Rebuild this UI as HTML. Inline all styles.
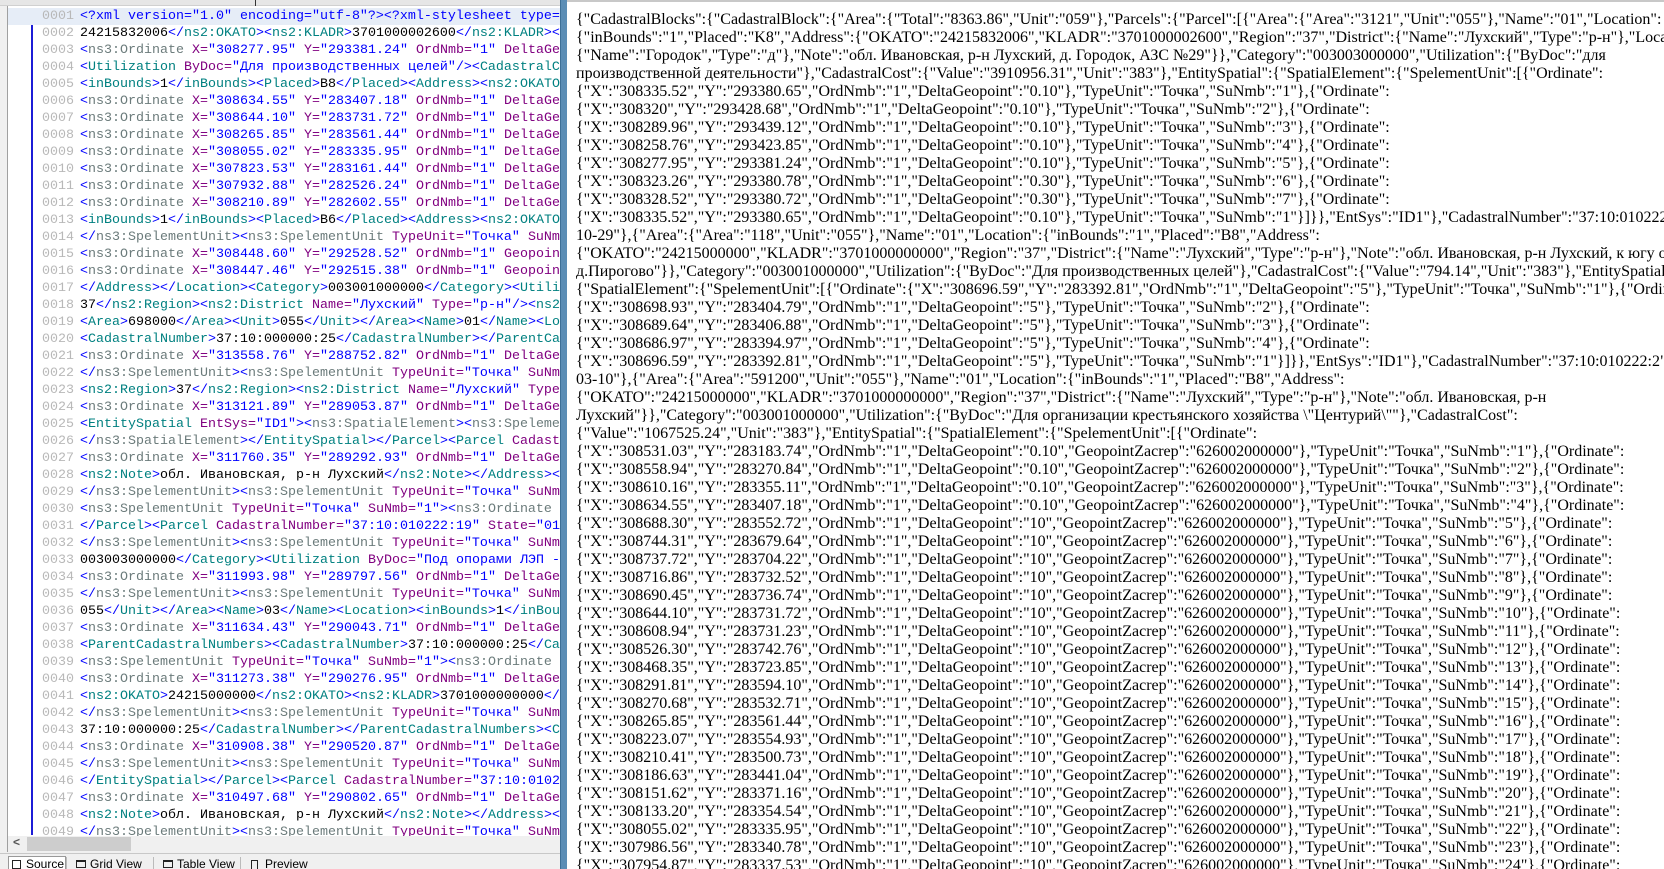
<!DOCTYPE html>
<html><head><meta charset="utf-8"><style>
*{margin:0;padding:0;box-sizing:border-box}
html,body{width:1664px;height:869px;overflow:hidden}
body{background:#fff;position:relative;font-family:"Liberation Sans",sans-serif}
#left{position:absolute;left:0;top:0;width:560px;height:869px;background:#f0f0f0;overflow:hidden}
#topbar{position:absolute;left:0;top:0;width:560px;height:6px;background:#e6e6e6;border-bottom:1px solid #d0d0d0}
#topbar .s{position:absolute;left:255px;top:0;width:1px;height:6px;background:#333}
#edit{position:absolute;left:7px;top:6px;width:553px;height:830px;background:#fff;border-left:1px solid #a0a0a0;overflow:hidden}
#vline{position:absolute;left:23px;top:8px;width:2px;height:821px;background:#1c1cd6}
#vline2{position:absolute;left:23px;top:8px;width:6px;height:2px;background:#1c1cd6}
.code{position:absolute;left:0;top:2px;font-family:"Liberation Mono",monospace;font-size:13.33px;line-height:17px;white-space:normal;width:1200px}
.r{height:17px;padding-left:72px;position:relative;white-space:pre;overflow:hidden}
.r.h{background:#e6edf7}
.n{position:absolute;left:34px;color:#b8b8b8}
.b{color:#0000ff}.t{color:#008080}.g{color:#6b7b7b}.a{color:#800080}.v{color:#0000ff}.k{color:#000}
#hs{position:absolute;left:7px;top:836px;width:553px;height:16px;background:#f0f0f0;border-left:1px solid #a0a0a0}
#hs .th{position:absolute;left:19px;top:1px;width:104px;height:14px;background:#cdcdcd}
#hs .ar{position:absolute;left:5px;top:-1px;font-size:12px;color:#555;font-weight:bold}
#tabs{position:absolute;left:0;top:853px;width:560px;height:16px;background:#f0f0f0;border-top:1px solid #c8c8c8;font-size:12px;color:#000}
.tab{position:absolute;top:3px;height:16px;padding-left:16px;white-space:nowrap}
.tab i{position:absolute;left:2px;top:3px;width:10px;height:8px;border:1px solid #222;border-top-width:2px}
.sep{position:absolute;top:3px;width:1px;height:14px;background:#bbb}
#div{position:absolute;left:560px;top:0;width:7px;height:869px;background:#5b8db5;border-left:1px solid #3d6f96}
#right{position:absolute;left:567px;top:0;width:1097px;height:869px;background:#fff;border-top:2px solid #c8c8c8;overflow:hidden}
#rt{position:absolute;left:9px;top:9px;font-family:"Liberation Serif",serif;font-size:16px;line-height:18px;white-space:nowrap;color:#000}
</style></head><body>
<div id="left">
<div id="topbar"><div class="s"></div></div>
<div id="edit">
<div id="vline"></div><div id="vline2"></div>
<div class="code"><div class="r h"><span class="n">0001</span><span class="b">&lt;?xml version="1.0" encoding="utf-8"?&gt;&lt;?xml-stylesheet type="text/xsl"?&gt;</span></div><div class="r"><span class="n">0002</span><span class="k">24215832006</span><span class="b">&lt;/</span><span class="t">ns2:OKATO</span><span class="b">&gt;&lt;</span><span class="t">ns2:KLADR</span><span class="b">&gt;</span><span class="k">3701000002600</span><span class="b">&lt;/</span><span class="t">ns2:KLADR</span><span class="b">&gt;&lt;</span></div><div class="r"><span class="n">0003</span><span class="b">&lt;</span><span class="g">ns3:Ordinate </span><span class="a">X=</span><span class="v">"308277.95" </span><span class="a">Y=</span><span class="v">"293381.24" </span><span class="a">OrdNmb=</span><span class="v">"1" </span><span class="a">DeltaGeopoint</span></div><div class="r"><span class="n">0004</span><span class="b">&lt;</span><span class="t">Utilization </span><span class="a">ByDoc=</span><span class="v">"Для производственных целей"</span><span class="b">/&gt;&lt;</span><span class="t">CadastralCost</span></div><div class="r"><span class="n">0005</span><span class="b">&lt;</span><span class="t">inBounds</span><span class="b">&gt;</span><span class="k">1</span><span class="b">&lt;/</span><span class="t">inBounds</span><span class="b">&gt;&lt;</span><span class="t">Placed</span><span class="b">&gt;</span><span class="k">B8</span><span class="b">&lt;/</span><span class="t">Placed</span><span class="b">&gt;&lt;</span><span class="t">Address</span><span class="b">&gt;&lt;</span><span class="t">ns2:OKATO</span></div><div class="r"><span class="n">0006</span><span class="b">&lt;</span><span class="g">ns3:Ordinate </span><span class="a">X=</span><span class="v">"308634.55" </span><span class="a">Y=</span><span class="v">"283407.18" </span><span class="a">OrdNmb=</span><span class="v">"1" </span><span class="a">DeltaGeopoint</span></div><div class="r"><span class="n">0007</span><span class="b">&lt;</span><span class="g">ns3:Ordinate </span><span class="a">X=</span><span class="v">"308644.10" </span><span class="a">Y=</span><span class="v">"283731.72" </span><span class="a">OrdNmb=</span><span class="v">"1" </span><span class="a">DeltaGeopoint</span></div><div class="r"><span class="n">0008</span><span class="b">&lt;</span><span class="g">ns3:Ordinate </span><span class="a">X=</span><span class="v">"308265.85" </span><span class="a">Y=</span><span class="v">"283561.44" </span><span class="a">OrdNmb=</span><span class="v">"1" </span><span class="a">DeltaGeopoint</span></div><div class="r"><span class="n">0009</span><span class="b">&lt;</span><span class="g">ns3:Ordinate </span><span class="a">X=</span><span class="v">"308055.02" </span><span class="a">Y=</span><span class="v">"283335.95" </span><span class="a">OrdNmb=</span><span class="v">"1" </span><span class="a">DeltaGeopoint</span></div><div class="r"><span class="n">0010</span><span class="b">&lt;</span><span class="g">ns3:Ordinate </span><span class="a">X=</span><span class="v">"307823.53" </span><span class="a">Y=</span><span class="v">"283161.44" </span><span class="a">OrdNmb=</span><span class="v">"1" </span><span class="a">DeltaGeopoint</span></div><div class="r"><span class="n">0011</span><span class="b">&lt;</span><span class="g">ns3:Ordinate </span><span class="a">X=</span><span class="v">"307932.88" </span><span class="a">Y=</span><span class="v">"282526.24" </span><span class="a">OrdNmb=</span><span class="v">"1" </span><span class="a">DeltaGeopoint</span></div><div class="r"><span class="n">0012</span><span class="b">&lt;</span><span class="g">ns3:Ordinate </span><span class="a">X=</span><span class="v">"308210.89" </span><span class="a">Y=</span><span class="v">"282602.55" </span><span class="a">OrdNmb=</span><span class="v">"1" </span><span class="a">DeltaGeopoint</span></div><div class="r"><span class="n">0013</span><span class="b">&lt;</span><span class="t">inBounds</span><span class="b">&gt;</span><span class="k">1</span><span class="b">&lt;/</span><span class="t">inBounds</span><span class="b">&gt;&lt;</span><span class="t">Placed</span><span class="b">&gt;</span><span class="k">B6</span><span class="b">&lt;/</span><span class="t">Placed</span><span class="b">&gt;&lt;</span><span class="t">Address</span><span class="b">&gt;&lt;</span><span class="t">ns2:OKATO</span></div><div class="r"><span class="n">0014</span><span class="b">&lt;/</span><span class="g">ns3:SpelementUnit</span><span class="b">&gt;&lt;</span><span class="g">ns3:SpelementUnit </span><span class="a">TypeUnit=</span><span class="v">"Точка" </span><span class="a">SuNmb</span></div><div class="r"><span class="n">0015</span><span class="b">&lt;</span><span class="g">ns3:Ordinate </span><span class="a">X=</span><span class="v">"308448.60" </span><span class="a">Y=</span><span class="v">"292528.52" </span><span class="a">OrdNmb=</span><span class="v">"1" </span><span class="a">Geopoint</span></div><div class="r"><span class="n">0016</span><span class="b">&lt;</span><span class="g">ns3:Ordinate </span><span class="a">X=</span><span class="v">"308447.46" </span><span class="a">Y=</span><span class="v">"292515.38" </span><span class="a">OrdNmb=</span><span class="v">"1" </span><span class="a">Geopoint</span></div><div class="r"><span class="n">0017</span><span class="b">&lt;/</span><span class="t">Address</span><span class="b">&gt;&lt;/</span><span class="t">Location</span><span class="b">&gt;&lt;</span><span class="t">Category</span><span class="b">&gt;</span><span class="k">003001000000</span><span class="b">&lt;/</span><span class="t">Category</span><span class="b">&gt;&lt;</span><span class="t">Utili</span></div><div class="r"><span class="n">0018</span><span class="k">37</span><span class="b">&lt;/</span><span class="t">ns2:Region</span><span class="b">&gt;&lt;</span><span class="t">ns2:District </span><span class="a">Name=</span><span class="v">"Лухский" </span><span class="a">Type=</span><span class="v">"р-н"</span><span class="b">/&gt;&lt;</span><span class="t">ns2</span></div><div class="r"><span class="n">0019</span><span class="b">&lt;</span><span class="t">Area</span><span class="b">&gt;</span><span class="k">698000</span><span class="b">&lt;/</span><span class="t">Area</span><span class="b">&gt;&lt;</span><span class="t">Unit</span><span class="b">&gt;</span><span class="k">055</span><span class="b">&lt;/</span><span class="t">Unit</span><span class="b">&gt;&lt;/</span><span class="t">Area</span><span class="b">&gt;&lt;</span><span class="t">Name</span><span class="b">&gt;</span><span class="k">01</span><span class="b">&lt;/</span><span class="t">Name</span><span class="b">&gt;&lt;</span><span class="t">Loc</span></div><div class="r"><span class="n">0020</span><span class="b">&lt;</span><span class="t">CadastralNumber</span><span class="b">&gt;</span><span class="k">37:10:000000:25</span><span class="b">&lt;/</span><span class="t">CadastralNumber</span><span class="b">&gt;&lt;/</span><span class="t">ParentCa</span></div><div class="r"><span class="n">0021</span><span class="b">&lt;</span><span class="g">ns3:Ordinate </span><span class="a">X=</span><span class="v">"313558.76" </span><span class="a">Y=</span><span class="v">"288752.82" </span><span class="a">OrdNmb=</span><span class="v">"1" </span><span class="a">DeltaGeo</span></div><div class="r"><span class="n">0022</span><span class="b">&lt;/</span><span class="g">ns3:SpelementUnit</span><span class="b">&gt;&lt;</span><span class="g">ns3:SpelementUnit </span><span class="a">TypeUnit=</span><span class="v">"Точка" </span><span class="a">SuNmb</span></div><div class="r"><span class="n">0023</span><span class="b">&lt;</span><span class="t">ns2:Region</span><span class="b">&gt;</span><span class="k">37</span><span class="b">&lt;/</span><span class="t">ns2:Region</span><span class="b">&gt;&lt;</span><span class="t">ns2:District </span><span class="a">Name=</span><span class="v">"Лухский" </span><span class="a">Type</span></div><div class="r"><span class="n">0024</span><span class="b">&lt;</span><span class="g">ns3:Ordinate </span><span class="a">X=</span><span class="v">"313121.89" </span><span class="a">Y=</span><span class="v">"289053.87" </span><span class="a">OrdNmb=</span><span class="v">"1" </span><span class="a">DeltaGeo</span></div><div class="r"><span class="n">0025</span><span class="b">&lt;</span><span class="t">EntitySpatial </span><span class="a">EntSys=</span><span class="v">"ID1"</span><span class="b">&gt;&lt;</span><span class="g">ns3:SpatialElement</span><span class="b">&gt;&lt;</span><span class="g">ns3:Speleme</span></div><div class="r"><span class="n">0026</span><span class="b">&lt;/</span><span class="g">ns3:SpatialElement</span><span class="b">&gt;&lt;/</span><span class="t">EntitySpatial</span><span class="b">&gt;&lt;/</span><span class="t">Parcel</span><span class="b">&gt;&lt;</span><span class="t">Parcel </span><span class="a">Cadast</span></div><div class="r"><span class="n">0027</span><span class="b">&lt;</span><span class="g">ns3:Ordinate </span><span class="a">X=</span><span class="v">"311760.35" </span><span class="a">Y=</span><span class="v">"289292.93" </span><span class="a">OrdNmb=</span><span class="v">"1" </span><span class="a">DeltaGeo</span></div><div class="r"><span class="n">0028</span><span class="b">&lt;</span><span class="t">ns2:Note</span><span class="b">&gt;</span><span class="k">обл. Ивановская, р-н Лухский</span><span class="b">&lt;/</span><span class="t">ns2:Note</span><span class="b">&gt;&lt;/</span><span class="t">Address</span><span class="b">&gt;&lt;</span></div><div class="r"><span class="n">0029</span><span class="b">&lt;/</span><span class="g">ns3:SpelementUnit</span><span class="b">&gt;&lt;</span><span class="g">ns3:SpelementUnit </span><span class="a">TypeUnit=</span><span class="v">"Точка" </span><span class="a">SuNmb</span></div><div class="r"><span class="n">0030</span><span class="b">&lt;</span><span class="g">ns3:SpelementUnit </span><span class="a">TypeUnit=</span><span class="v">"Точка" </span><span class="a">SuNmb=</span><span class="v">"1"</span><span class="b">&gt;&lt;</span><span class="g">ns3:Ordinate </span><span class="a">X</span></div><div class="r"><span class="n">0031</span><span class="b">&lt;/</span><span class="t">Parcel</span><span class="b">&gt;&lt;</span><span class="t">Parcel </span><span class="a">CadastralNumber=</span><span class="v">"37:10:010222:19" </span><span class="a">State=</span><span class="v">"01</span></div><div class="r"><span class="n">0032</span><span class="b">&lt;/</span><span class="g">ns3:SpelementUnit</span><span class="b">&gt;&lt;</span><span class="g">ns3:SpelementUnit </span><span class="a">TypeUnit=</span><span class="v">"Точка" </span><span class="a">SuNmb</span></div><div class="r"><span class="n">0033</span><span class="k">003003000000</span><span class="b">&lt;/</span><span class="t">Category</span><span class="b">&gt;&lt;</span><span class="t">Utilization </span><span class="a">ByDoc=</span><span class="v">"Под опорами ЛЭП -</span></div><div class="r"><span class="n">0034</span><span class="b">&lt;</span><span class="g">ns3:Ordinate </span><span class="a">X=</span><span class="v">"311993.98" </span><span class="a">Y=</span><span class="v">"289797.56" </span><span class="a">OrdNmb=</span><span class="v">"1" </span><span class="a">DeltaGeo</span></div><div class="r"><span class="n">0035</span><span class="b">&lt;/</span><span class="g">ns3:SpelementUnit</span><span class="b">&gt;&lt;</span><span class="g">ns3:SpelementUnit </span><span class="a">TypeUnit=</span><span class="v">"Точка" </span><span class="a">SuNmb</span></div><div class="r"><span class="n">0036</span><span class="k">055</span><span class="b">&lt;/</span><span class="t">Unit</span><span class="b">&gt;&lt;/</span><span class="t">Area</span><span class="b">&gt;&lt;</span><span class="t">Name</span><span class="b">&gt;</span><span class="k">03</span><span class="b">&lt;/</span><span class="t">Name</span><span class="b">&gt;&lt;</span><span class="t">Location</span><span class="b">&gt;&lt;</span><span class="t">inBounds</span><span class="b">&gt;</span><span class="k">1</span><span class="b">&lt;/</span><span class="t">inBou</span></div><div class="r"><span class="n">0037</span><span class="b">&lt;</span><span class="g">ns3:Ordinate </span><span class="a">X=</span><span class="v">"311634.43" </span><span class="a">Y=</span><span class="v">"290043.71" </span><span class="a">OrdNmb=</span><span class="v">"1" </span><span class="a">DeltaGeo</span></div><div class="r"><span class="n">0038</span><span class="b">&lt;</span><span class="t">ParentCadastralNumbers</span><span class="b">&gt;&lt;</span><span class="t">CadastralNumber</span><span class="b">&gt;</span><span class="k">37:10:000000:25</span><span class="b">&lt;/</span><span class="t">Ca</span></div><div class="r"><span class="n">0039</span><span class="b">&lt;</span><span class="g">ns3:SpelementUnit </span><span class="a">TypeUnit=</span><span class="v">"Точка" </span><span class="a">SuNmb=</span><span class="v">"1"</span><span class="b">&gt;&lt;</span><span class="g">ns3:Ordinate </span><span class="a">X</span></div><div class="r"><span class="n">0040</span><span class="b">&lt;</span><span class="g">ns3:Ordinate </span><span class="a">X=</span><span class="v">"311273.38" </span><span class="a">Y=</span><span class="v">"290276.95" </span><span class="a">OrdNmb=</span><span class="v">"1" </span><span class="a">DeltaGeo</span></div><div class="r"><span class="n">0041</span><span class="b">&lt;</span><span class="t">ns2:OKATO</span><span class="b">&gt;</span><span class="k">24215000000</span><span class="b">&lt;/</span><span class="t">ns2:OKATO</span><span class="b">&gt;&lt;</span><span class="t">ns2:KLADR</span><span class="b">&gt;</span><span class="k">3701000000000</span><span class="b">&lt;/</span></div><div class="r"><span class="n">0042</span><span class="b">&lt;/</span><span class="g">ns3:SpelementUnit</span><span class="b">&gt;&lt;</span><span class="g">ns3:SpelementUnit </span><span class="a">TypeUnit=</span><span class="v">"Точка" </span><span class="a">SuNmb</span></div><div class="r"><span class="n">0043</span><span class="k">37:10:000000:25</span><span class="b">&lt;/</span><span class="t">CadastralNumber</span><span class="b">&gt;&lt;/</span><span class="t">ParentCadastralNumbers</span><span class="b">&gt;&lt;</span><span class="t">C</span></div><div class="r"><span class="n">0044</span><span class="b">&lt;</span><span class="g">ns3:Ordinate </span><span class="a">X=</span><span class="v">"310908.38" </span><span class="a">Y=</span><span class="v">"290520.87" </span><span class="a">OrdNmb=</span><span class="v">"1" </span><span class="a">DeltaGeo</span></div><div class="r"><span class="n">0045</span><span class="b">&lt;/</span><span class="g">ns3:SpelementUnit</span><span class="b">&gt;&lt;</span><span class="g">ns3:SpelementUnit </span><span class="a">TypeUnit=</span><span class="v">"Точка" </span><span class="a">SuNmb</span></div><div class="r"><span class="n">0046</span><span class="b">&lt;/</span><span class="t">EntitySpatial</span><span class="b">&gt;&lt;/</span><span class="t">Parcel</span><span class="b">&gt;&lt;</span><span class="t">Parcel </span><span class="a">CadastralNumber=</span><span class="v">"37:10:01022</span></div><div class="r"><span class="n">0047</span><span class="b">&lt;</span><span class="g">ns3:Ordinate </span><span class="a">X=</span><span class="v">"310497.68" </span><span class="a">Y=</span><span class="v">"290802.65" </span><span class="a">OrdNmb=</span><span class="v">"1" </span><span class="a">DeltaGeo</span></div><div class="r"><span class="n">0048</span><span class="b">&lt;</span><span class="t">ns2:Note</span><span class="b">&gt;</span><span class="k">обл. Ивановская, р-н Лухский</span><span class="b">&lt;/</span><span class="t">ns2:Note</span><span class="b">&gt;&lt;/</span><span class="t">Address</span><span class="b">&gt;&lt;/</span></div><div class="r"><span class="n">0049</span><span class="b">&lt;/</span><span class="g">ns3:SpelementUnit</span><span class="b">&gt;&lt;</span><span class="g">ns3:SpelementUnit </span><span class="a">TypeUnit=</span><span class="v">"Точка" </span><span class="a">SuNmb</span></div></div>
</div>
<div id="hs"><span class="ar">&lt;</span><div class="th"></div></div>
<div id="tabs">
<div style="position:absolute;left:8px;top:2px;width:58px;height:16px;background:#fff;border:1px solid #999;border-bottom:none"></div>
<div class="tab" style="left:10px"><i style="border-top-width:1px;width:9px;height:9px"></i>Source</div>
<div class="sep" style="left:66px"></div>
<div class="tab" style="left:74px"><i></i>Grid View</div>
<div class="sep" style="left:153px"></div>
<div class="tab" style="left:161px"><i></i>Table View</div>
<div class="sep" style="left:240px"></div>
<div class="tab" style="left:249px"><i style="width:7px;height:10px;border-top-width:1px"></i>Preview</div>
</div>
</div>
<div id="div"></div>
<div id="right"><div id="rt">
{"CadastralBlocks":{"CadastralBlock":{"Area":{"Total":"8363.86","Unit":"059"},"Parcels":{"Parcel":[{"Area":{"Area":"3121","Unit":"055"},"Name":"01","Location":<br>
{"inBounds":"1","Placed":"K8","Address":{"OKATO":"24215832006","KLADR":"3701000002600","Region":"37","District":{"Name":"Лухский","Type":"р-н"},"Locality":<br>
{"Name":"Городок","Type":"д"},"Note":"обл. Ивановская, р-н Лухский, д. Городок, АЗС №29"}},"Category":"003003000000","Utilization":{"ByDoc":"для<br>
производственной деятельности"},"CadastralCost":{"Value":"3910956.31","Unit":"383"},"EntitySpatial":{"SpatialElement":{"SpelementUnit":[{"Ordinate":<br>
{"X":"308335.52","Y":"293380.65","OrdNmb":"1","DeltaGeopoint":"0.10"},"TypeUnit":"Точка","SuNmb":"1"},{"Ordinate":<br>
{"X":"308320","Y":"293428.68","OrdNmb":"1","DeltaGeopoint":"0.10"},"TypeUnit":"Точка","SuNmb":"2"},{"Ordinate":<br>
{"X":"308289.96","Y":"293439.12","OrdNmb":"1","DeltaGeopoint":"0.10"},"TypeUnit":"Точка","SuNmb":"3"},{"Ordinate":<br>
{"X":"308258.76","Y":"293423.85","OrdNmb":"1","DeltaGeopoint":"0.10"},"TypeUnit":"Точка","SuNmb":"4"},{"Ordinate":<br>
{"X":"308277.95","Y":"293381.24","OrdNmb":"1","DeltaGeopoint":"0.10"},"TypeUnit":"Точка","SuNmb":"5"},{"Ordinate":<br>
{"X":"308323.26","Y":"293380.78","OrdNmb":"1","DeltaGeopoint":"0.30"},"TypeUnit":"Точка","SuNmb":"6"},{"Ordinate":<br>
{"X":"308328.52","Y":"293380.72","OrdNmb":"1","DeltaGeopoint":"0.30"},"TypeUnit":"Точка","SuNmb":"7"},{"Ordinate":<br>
{"X":"308335.52","Y":"293380.65","OrdNmb":"1","DeltaGeopoint":"0.10"},"TypeUnit":"Точка","SuNmb":"1"}]}},"EntSys":"ID1"},"CadastralNumber":"37:10:010222:1","DateCreated":"2008-<br>
10-29"},{"Area":{"Area":"118","Unit":"055"},"Name":"01","Location":{"inBounds":"1","Placed":"B8","Address":<br>
{"OKATO":"24215000000","KLADR":"3701000000000","Region":"37","District":{"Name":"Лухский","Type":"р-н"},"Note":"обл. Ивановская, р-н Лухский, к югу от<br>
д.Пирогово"}},"Category":"003001000000","Utilization":{"ByDoc":"Для производственных целей"},"CadastralCost":{"Value":"794.14","Unit":"383"},"EntitySpatial":<br>
{"SpatialElement":{"SpelementUnit":[{"Ordinate":{"X":"308696.59","Y":"283392.81","OrdNmb":"1","DeltaGeopoint":"5"},"TypeUnit":"Точка","SuNmb":"1"},{"Ordinate":<br>
{"X":"308698.93","Y":"283404.79","OrdNmb":"1","DeltaGeopoint":"5"},"TypeUnit":"Точка","SuNmb":"2"},{"Ordinate":<br>
{"X":"308689.64","Y":"283406.88","OrdNmb":"1","DeltaGeopoint":"5"},"TypeUnit":"Точка","SuNmb":"3"},{"Ordinate":<br>
{"X":"308686.97","Y":"283394.97","OrdNmb":"1","DeltaGeopoint":"5"},"TypeUnit":"Точка","SuNmb":"4"},{"Ordinate":<br>
{"X":"308696.59","Y":"283392.81","OrdNmb":"1","DeltaGeopoint":"5"},"TypeUnit":"Точка","SuNmb":"1"}]}},"EntSys":"ID1"},"CadastralNumber":"37:10:010222:2","DateCreated":"2008-<br>
03-10"},{"Area":{"Area":"591200","Unit":"055"},"Name":"01","Location":{"inBounds":"1","Placed":"B8","Address":<br>
{"OKATO":"24215000000","KLADR":"3701000000000","Region":"37","District":{"Name":"Лухский","Type":"р-н"},"Note":"обл. Ивановская, р-н<br>
Лухский"}},"Category":"003001000000","Utilization":{"ByDoc":"Для организации крестьянского хозяйства \"Центурий\""},"CadastralCost":<br>
{"Value":"1067525.24","Unit":"383"},"EntitySpatial":{"SpatialElement":{"SpelementUnit":[{"Ordinate":<br>
{"X":"308531.03","Y":"283183.74","OrdNmb":"1","DeltaGeopoint":"0.10","GeopointZacrep":"626002000000"},"TypeUnit":"Точка","SuNmb":"1"},{"Ordinate":<br>
{"X":"308558.94","Y":"283270.84","OrdNmb":"1","DeltaGeopoint":"0.10","GeopointZacrep":"626002000000"},"TypeUnit":"Точка","SuNmb":"2"},{"Ordinate":<br>
{"X":"308610.16","Y":"283355.11","OrdNmb":"1","DeltaGeopoint":"0.10","GeopointZacrep":"626002000000"},"TypeUnit":"Точка","SuNmb":"3"},{"Ordinate":<br>
{"X":"308634.55","Y":"283407.18","OrdNmb":"1","DeltaGeopoint":"0.10","GeopointZacrep":"626002000000"},"TypeUnit":"Точка","SuNmb":"4"},{"Ordinate":<br>
{"X":"308688.30","Y":"283552.72","OrdNmb":"1","DeltaGeopoint":"10","GeopointZacrep":"626002000000"},"TypeUnit":"Точка","SuNmb":"5"},{"Ordinate":<br>
{"X":"308744.31","Y":"283679.64","OrdNmb":"1","DeltaGeopoint":"10","GeopointZacrep":"626002000000"},"TypeUnit":"Точка","SuNmb":"6"},{"Ordinate":<br>
{"X":"308737.72","Y":"283704.22","OrdNmb":"1","DeltaGeopoint":"10","GeopointZacrep":"626002000000"},"TypeUnit":"Точка","SuNmb":"7"},{"Ordinate":<br>
{"X":"308716.86","Y":"283732.52","OrdNmb":"1","DeltaGeopoint":"10","GeopointZacrep":"626002000000"},"TypeUnit":"Точка","SuNmb":"8"},{"Ordinate":<br>
{"X":"308690.45","Y":"283736.74","OrdNmb":"1","DeltaGeopoint":"10","GeopointZacrep":"626002000000"},"TypeUnit":"Точка","SuNmb":"9"},{"Ordinate":<br>
{"X":"308644.10","Y":"283731.72","OrdNmb":"1","DeltaGeopoint":"10","GeopointZacrep":"626002000000"},"TypeUnit":"Точка","SuNmb":"10"},{"Ordinate":<br>
{"X":"308608.94","Y":"283731.23","OrdNmb":"1","DeltaGeopoint":"10","GeopointZacrep":"626002000000"},"TypeUnit":"Точка","SuNmb":"11"},{"Ordinate":<br>
{"X":"308526.30","Y":"283742.76","OrdNmb":"1","DeltaGeopoint":"10","GeopointZacrep":"626002000000"},"TypeUnit":"Точка","SuNmb":"12"},{"Ordinate":<br>
{"X":"308468.35","Y":"283723.85","OrdNmb":"1","DeltaGeopoint":"10","GeopointZacrep":"626002000000"},"TypeUnit":"Точка","SuNmb":"13"},{"Ordinate":<br>
{"X":"308291.81","Y":"283594.10","OrdNmb":"1","DeltaGeopoint":"10","GeopointZacrep":"626002000000"},"TypeUnit":"Точка","SuNmb":"14"},{"Ordinate":<br>
{"X":"308270.68","Y":"283532.71","OrdNmb":"1","DeltaGeopoint":"10","GeopointZacrep":"626002000000"},"TypeUnit":"Точка","SuNmb":"15"},{"Ordinate":<br>
{"X":"308265.85","Y":"283561.44","OrdNmb":"1","DeltaGeopoint":"10","GeopointZacrep":"626002000000"},"TypeUnit":"Точка","SuNmb":"16"},{"Ordinate":<br>
{"X":"308223.07","Y":"283554.93","OrdNmb":"1","DeltaGeopoint":"10","GeopointZacrep":"626002000000"},"TypeUnit":"Точка","SuNmb":"17"},{"Ordinate":<br>
{"X":"308210.41","Y":"283500.73","OrdNmb":"1","DeltaGeopoint":"10","GeopointZacrep":"626002000000"},"TypeUnit":"Точка","SuNmb":"18"},{"Ordinate":<br>
{"X":"308186.63","Y":"283441.04","OrdNmb":"1","DeltaGeopoint":"10","GeopointZacrep":"626002000000"},"TypeUnit":"Точка","SuNmb":"19"},{"Ordinate":<br>
{"X":"308151.62","Y":"283371.16","OrdNmb":"1","DeltaGeopoint":"10","GeopointZacrep":"626002000000"},"TypeUnit":"Точка","SuNmb":"20"},{"Ordinate":<br>
{"X":"308133.20","Y":"283354.54","OrdNmb":"1","DeltaGeopoint":"10","GeopointZacrep":"626002000000"},"TypeUnit":"Точка","SuNmb":"21"},{"Ordinate":<br>
{"X":"308055.02","Y":"283335.95","OrdNmb":"1","DeltaGeopoint":"10","GeopointZacrep":"626002000000"},"TypeUnit":"Точка","SuNmb":"22"},{"Ordinate":<br>
{"X":"307986.56","Y":"283340.78","OrdNmb":"1","DeltaGeopoint":"10","GeopointZacrep":"626002000000"},"TypeUnit":"Точка","SuNmb":"23"},{"Ordinate":<br>
{"X":"307954.87","Y":"283337.53","OrdNmb":"1","DeltaGeopoint":"10","GeopointZacrep":"626002000000"},"TypeUnit":"Точка","SuNmb":"24"},{"Ordinate":
</div></div>
</body></html>
